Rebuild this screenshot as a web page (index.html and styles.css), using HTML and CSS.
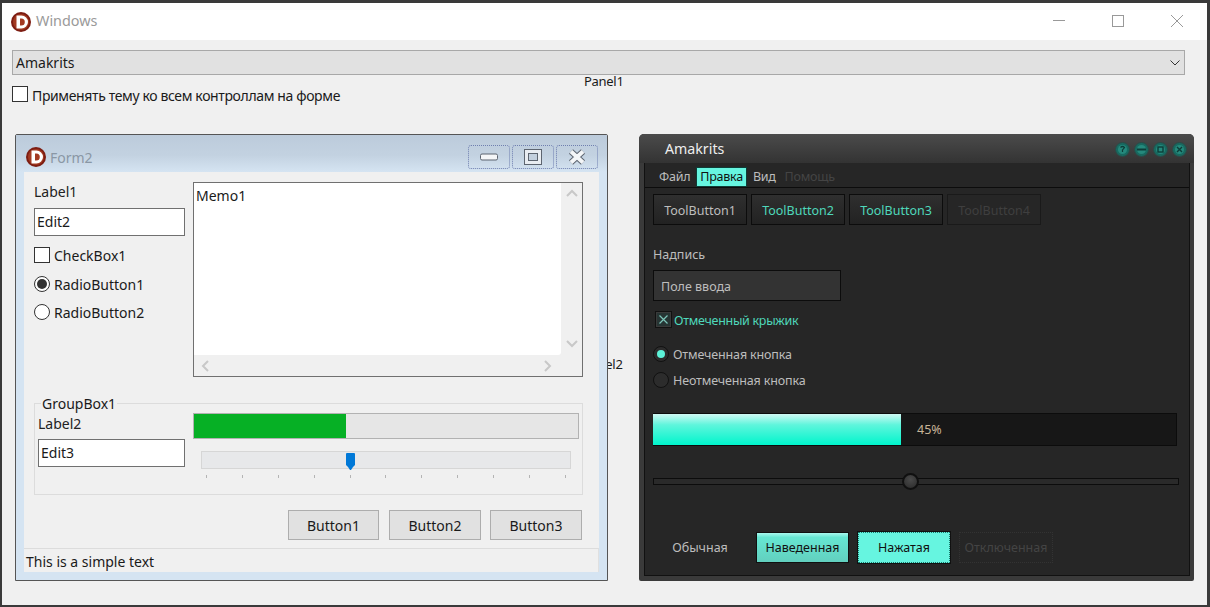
FILE: index.html
```html
<!DOCTYPE html>
<html lang="ru">
<head>
    <meta charset="UTF-8">
    <meta name="viewport" content="width=device-width, initial-scale=1.0">
    <title>Windows</title>
    <link rel="stylesheet" href="styles.css">
</head>
<body>
    <svg class="defs" width="0" height="0">
        <symbol id="logo" viewBox="0 0 20 20">
            <circle cx="10" cy="10" r="10" fill="#7d1d12"/>
            <circle cx="10" cy="10" r="8" fill="#a33a22"/>
            <path d="M5.5 3.5h5a6.5 6.5 0 0 1 0 13h-5zM9 6.5v7h1.3a3.5 3.5 0 0 0 0-7z" fill="#fff" fill-rule="evenodd"/>
        </symbol>
    </svg>

    <div class="app">
        <div class="titlebar">
            <svg class="logo" width="20" height="20"><use href="#logo"/></svg>
            <span class="title-text">Windows</span>
            <div class="caption-btns">
                <div class="caption-btn"><svg width="12" height="12"><path d="M0 5.5h12" stroke="#999"/></svg></div>
                <div class="caption-btn"><svg width="12" height="12"><rect x=".5" y=".5" width="11" height="11" fill="none" stroke="#999"/></svg></div>
                <div class="caption-btn"><svg width="12" height="12"><path d="M0 0l12 12M12 0L0 12" stroke="#999"/></svg></div>
            </div>
        </div>

        <div class="client">
            <div class="combo">
                <span>Amakrits</span>
                <svg width="10" height="6"><path d="M.5 .5L5 5l4.5-4.5" fill="none" stroke="#333"/></svg>
            </div>
            <label class="check-row top-check"><span class="box"></span><span class="top-check-text">Применять тему ко всем контроллам на форме</span></label>

            <span class="panel-cap panel1">Panel1</span>
            <span class="panel-cap panel2">Panel2</span>

            <!-- светлое окно -->
            <div class="form2">
                <div class="f2-title">
                    <svg class="f2-logo" width="20" height="20"><use href="#logo"/></svg>
                    <span class="f2-name">Form2</span>
                    <div class="f2-btns">
                        <div class="f2-btn"><svg width="18" height="8"><rect x=".5" y="1" width="17" height="6" rx="1.5" fill="#f4f6f8" stroke="#5d6570"/></svg></div>
                        <div class="f2-btn"><svg width="18" height="16"><rect x=".5" y=".5" width="17" height="15" fill="#e9edf2" stroke="#5d6570"/><rect x="4.5" y="4.5" width="9" height="7" fill="#c3d0de" stroke="#5d6570"/></svg></div>
                        <div class="f2-btn"><svg width="18" height="16"><path d="M3 2.5l12 11M15 2.5L3 13.5" stroke="#5d6570" stroke-width="6"/><path d="M3 2.5l12 11M15 2.5L3 13.5" stroke="#f4f6f8" stroke-width="4"/></svg></div>
                    </div>
                </div>
                <div class="f2-body">
                    <div class="f2-top">
                        <div class="f2-left">
                            <div class="lbl lbl-first">Label1</div>
                            <div class="edit">Edit2</div>
                            <label class="check-row row28"><span class="box"></span>CheckBox1</label>
                            <label class="check-row row28 first-radio"><span class="radio on"></span>RadioButton1</label>
                            <label class="check-row row28"><span class="radio"></span>RadioButton2</label>
                        </div>
                        <div class="memo">
                            <div class="memo-main">
                                <div class="memo-text">Memo1</div>
                                <div class="vscroll">
                                    <svg width="12" height="8"><path d="M1 7l5-5 5 5" fill="none" stroke="#c8c8c8" stroke-width="2"/></svg>
                                    <svg width="12" height="8"><path d="M1 1l5 5 5-5" fill="none" stroke="#c8c8c8" stroke-width="2"/></svg>
                                </div>
                            </div>
                            <div class="hscroll">
                                <svg width="8" height="12"><path d="M7 1L2 6l5 5" fill="none" stroke="#c8c8c8" stroke-width="2"/></svg>
                                <svg width="8" height="12"><path d="M1 1l5 5-5 5" fill="none" stroke="#c8c8c8" stroke-width="2"/></svg>
                            </div>
                        </div>
                    </div>

                    <div class="group">
                        <span class="group-cap">GroupBox1</span>
                        <div class="group-left">
                            <div class="lbl">Label2</div>
                            <div class="edit edit-small">Edit3</div>
                        </div>
                        <div class="group-right">
                            <div class="progress"><div class="progress-fill"></div></div>
                            <div class="track">
                                <svg class="thumb" width="10" height="17"><path d="M0 1q0-1 1-1h7q1 0 1 1v11l-2 2-2 3-1 0-2-3-2-2z" fill="#0078d7"/></svg>
                            </div>
                            <div class="ticks">
                                <i></i><i></i><i></i><i></i><i></i><i></i><i></i><i></i><i></i><i></i><i></i>
                            </div>
                        </div>
                    </div>

                    <div class="f2-buttons">
                        <div class="btn btn-first">Button1</div>
                        <div class="btn">Button2</div>
                        <div class="btn">Button3</div>
                    </div>

                    <div class="statusbar">This is a simple text</div>
                </div>
            </div>

            <!-- тёмное окно -->
            <div class="dark">
                <div class="d-title">
                    <span class="d-name">Amakrits</span>
                    <div class="d-caps">
                        <svg width="15" height="15"><circle cx="7.5" cy="7.5" r="7" fill="#176a60" stroke="#2d4a47"/><circle cx="7.5" cy="7.5" r="4.5" fill="#25897c"/><path d="M5.5 5.5q2-2 4 0L7.5 8v2" fill="none" stroke="#0c3d38" stroke-width="1.2"/></svg>
                        <svg width="15" height="15"><circle cx="7.5" cy="7.5" r="7" fill="#176a60" stroke="#2d4a47"/><circle cx="7.5" cy="7.5" r="4.5" fill="#25897c"/><path d="M3 7.5h9" stroke="#0c3d38" stroke-width="2"/></svg>
                        <svg width="15" height="15"><circle cx="7.5" cy="7.5" r="7" fill="#176a60" stroke="#2d4a47"/><circle cx="7.5" cy="7.5" r="4.5" fill="#25897c"/><rect x="5" y="5" width="5" height="5" fill="none" stroke="#0c3d38" stroke-width="1.4"/></svg>
                        <svg width="15" height="15"><circle cx="7.5" cy="7.5" r="7" fill="#176a60" stroke="#2d4a47"/><circle cx="7.5" cy="7.5" r="4.5" fill="#25897c"/><path d="M5 5l5 5M10 5l-5 5" stroke="#0c3d38" stroke-width="1.4"/></svg>
                    </div>
                </div>
                <div class="d-body">
                    <div class="d-menu">
                        <span class="d-item">Файл</span>
                        <span class="d-item d-item-active">Правка</span>
                        <span class="d-item">Вид</span>
                        <span class="d-item d-item-off">Помощь</span>
                    </div>
                    <div class="d-content">
                        <div class="d-tools">
                            <div class="tool">ToolButton1</div>
                            <div class="tool tool-teal">ToolButton2</div>
                            <div class="tool tool-teal">ToolButton3</div>
                            <div class="tool tool-off">ToolButton4</div>
                        </div>
                        <div class="d-lbl">Надпись</div>
                        <div class="d-edit">Поле ввода</div>
                        <div class="d-check">
                            <svg width="17" height="17"><rect x=".5" y=".5" width="16" height="16" fill="#3a3a3a" stroke="#111"/><rect x="2" y="2" width="13" height="13" fill="#263433"/><path d="M4.5 4.5l8 8M12.5 4.5l-8 8" stroke="#7cc4b8" stroke-width="1.2"/></svg>
                            Отмеченный крыжик
                        </div>
                        <div class="d-radios">
                            <div class="d-radio"><span class="d-dot d-dot-on"></span>Отмеченная кнопка</div>
                            <div class="d-radio"><span class="d-dot"></span>Неотмеченная кнопка</div>
                        </div>
                        <div class="d-progress"><div class="d-fill"></div><span class="d-pct">45%</span></div>
                        <div class="d-slider"><span class="d-knob"></span></div>
                        <div class="d-buttons">
                            <div class="d-btn">Обычная</div>
                            <div class="d-btn d-btn-hover">Наведенная</div>
                            <div class="d-btn d-btn-down">Нажатая</div>
                            <div class="d-btn d-btn-off">Отключенная</div>
                        </div>
                    </div>
                </div>
            </div>
        </div>
    </div>
</body>
</html>
```

FILE: styles.css
```css
* {
    box-sizing: border-box;
}
html, body {
    height: 100%;
}
body {
    margin: 0;
    overflow: hidden;
    background-color: #3a3a3a;
    font-family: "Noto Sans", "Open Sans", sans-serif;
    font-size: 14px;
    color: #1a1a1a;
}
.defs {
    position: absolute;
}
.app {
    margin: 3px 3px 0 2px;
    height: 602px;
    display: flex;
    flex-direction: column;
}

/* заголовок главного окна */
.titlebar {
    height: 37px;
    flex: none;
    background-color: #fff;
    display: flex;
    align-items: center;
    padding-left: 9px;
}
.title-text {
    margin: -2px 0 0 5px;
    font-size: 14.4px;
    color: #9a9a9a;
}
.caption-btns {
    margin-left: auto;
    margin-right: 1px;
    display: flex;
}
.caption-btn {
    width: 59px;
    height: 37px;
    padding-bottom: 1px;
    display: flex;
    align-items: center;
    justify-content: center;
}

.client {
    flex: 1;
    position: relative;
    background-color: #f0f0f0;
    padding: 10px 0 0 10px;
}
.combo {
    width: 1173px;
    height: 25px;
    background-color: #e1e1e1;
    border: 1px solid #a8a8a8;
    padding: 0 3px;
    display: flex;
    align-items: center;
    justify-content: space-between;
}
.combo svg {
    margin-right: 1px;
}
.check-row {
    display: flex;
    align-items: center;
    gap: 4px;
}
.top-check {
    margin-top: 11px;
    height: 16px;
    letter-spacing: -0.37px;
}
.top-check-text {
    margin-top: 2px;
}
.box {
    width: 16px;
    height: 16px;
    flex: none;
    background-color: #fff;
    border: 1px solid #333;
}
.radio {
    width: 16px;
    height: 16px;
    flex: none;
    background-color: #fff;
    border: 1px solid #333;
    border-radius: 50%;
    display: flex;
    align-items: center;
    justify-content: center;
}
.radio.on::after {
    content: "";
    width: 10px;
    height: 10px;
    border-radius: 50%;
    background-color: #333;
}
.panel-cap {
    position: absolute;
    font-size: 13px;
    letter-spacing: -0.3px;
}
.panel1 {
    left: 582px;
    top: 32px;
}
.panel2 {
    left: 581px;
    top: 315px;
}

/* Form2 */
.form2 {
    position: absolute;
    left: 13px;
    top: 94px;
    width: 593px;
    height: 447px;
    background-color: #d5e4f2;
    border: 1px solid #555;
    border-radius: 2px 2px 0 0;
    display: flex;
    flex-direction: column;
}
.f2-title {
    height: 37px;
    flex: none;
    background: linear-gradient(#bccbdb, #c3d2e1 55%, #d5e4f2);
    display: flex;
    align-items: center;
    padding: 7px 0 0 10px;
}
.f2-name {
    margin-left: 4px;
    color: #8a97a5;
    font-size: 14px;
}
.f2-btns {
    margin-left: auto;
    margin-right: 9px;
    display: flex;
    gap: 2px;
}
.f2-btn {
    width: 42px;
    height: 24px;
    border: 1px dotted #6f7fb0;
    border-radius: 3px;
    display: flex;
    align-items: center;
    justify-content: center;
}
.f2-body {
    flex: 1;
    margin: 0 8px 8px;
    background-color: #f0f0f0;
    display: flex;
    flex-direction: column;
}
.f2-top {
    display: grid;
    grid-template-columns: 151px 390px;
    gap: 8px;
    padding: 10px 0 0 10px;
    height: 205px;
}
.lbl {
    height: 20px;
    line-height: 20px;
    color: #222;
}
.lbl-first {
    height: 21px;
}
.edit {
    height: 28px;
    margin-top: 5px;
    background-color: #fff;
    border: 1px solid #707070;
    line-height: 26px;
    padding-left: 2px;
}
.row28 {
    height: 28px;
}
.edit + .row28 {
    margin-top: 5px;
}
.first-radio {
    margin-top: 1px;
}
.memo {
    height: 195px;
    border: 1px solid #707070;
    background-color: #f0f0f0;
    display: flex;
    flex-direction: column;
}
.memo-main {
    flex: 1;
    display: flex;
}
.memo-text {
    flex: 1;
    background-color: #fff;
    border-radius: 0 0 3px 0;
    padding: 3px 2px;
}
.vscroll {
    width: 21px;
    display: flex;
    flex-direction: column;
    justify-content: space-between;
    align-items: center;
    padding: 6px 0 7px;
}
.hscroll {
    height: 21px;
    display: flex;
    align-items: center;
    justify-content: space-between;
    padding: 0 30px 0 7px;
}

.group {
    position: relative;
    margin: 26px 0 0 10px;
    width: 549px;
    height: 92px;
    border: 1px solid #dcdcdc;
    display: grid;
    grid-template-columns: 147px 386px;
    column-gap: 8px;
    padding: 9px 0 0 3px;
}
.group-cap {
    position: absolute;
    left: 6px;
    top: -10px;
    padding: 0 1px;
    height: 20px;
    line-height: 20px;
    background-color: #f0f0f0;
}
.group-left .lbl {
    margin-top: 1px;
}
.progress {
    height: 26px;
    background-color: #e6e6e6;
    border: 1px solid #b2b2b2;
}
.progress-fill {
    width: 152px;
    height: 100%;
    background-color: #06b025;
}
.track {
    position: relative;
    margin: 12px 0 0 8px;
    width: 370px;
    height: 18px;
    background-color: #e7e8ea;
    border: 1px solid #d6d6d6;
}
.thumb {
    position: absolute;
    left: 144px;
    top: 1px;
}
.ticks {
    margin: 6px 0 0 13px;
    width: 360px;
    display: flex;
    justify-content: space-between;
}
.ticks i {
    width: 1px;
    height: 3px;
    background-color: #b4b4b4;
}

.f2-buttons {
    margin-top: 15px;
    padding-right: 17px;
    display: flex;
    justify-content: flex-end;
    gap: 9px;
}
.btn {
    width: 92px;
    height: 30px;
    background-color: #e1e1e1;
    border: 1px solid #adadad;
    line-height: 30px;
    text-align: center;
}
.btn-first {
    width: 91px;
    margin-right: 1px;
}
.statusbar {
    margin-top: auto;
    height: 24px;
    border-top: 1px solid #dcdcdc;
    border-right: 1px solid #e0e0e0;
    padding-left: 2px;
    line-height: 26px;
}

/* тёмное окно */
.dark {
    position: absolute;
    left: 637px;
    top: 94px;
    width: 555px;
    height: 447px;
    background-color: #3a3a3a;
    border-radius: 5px 5px 2px 2px;
    display: flex;
    flex-direction: column;
    color: #bdbdbd;
    font-size: 12.5px;
}
.d-title {
    height: 29px;
    flex: none;
    background: linear-gradient(#4b4b4b, #333);
    border-radius: 5px 5px 0 0;
    display: flex;
    align-items: center;
    padding: 0 7px 0 26px;
}
.d-name {
    line-height: 28px;
    color: #eee;
    font-size: 14.2px;
}
.d-caps {
    margin-left: auto;
    display: flex;
    gap: 4px;
    margin-top: 1px;
}
.d-body {
    flex: 1;
    margin: 0 4px 5px 5px;
    background-color: #262626;
    border: 1px solid #111;
    border-top: 0;
    display: flex;
    flex-direction: column;
}
.d-menu {
    height: 25px;
    flex: none;
    border-bottom: 1px solid #0c0c0c;
    display: flex;
    align-items: flex-end;
    padding-left: 11px;
    gap: 3px;
    letter-spacing: -0.25px;
}
.d-item {
    height: 20px;
    line-height: 19px;
    padding: 0 3px;
}
.d-item-active {
    padding: 0 4px;
    background-color: #66f5e0;
    color: #111;
    box-shadow: inset 0 0 0 1px #0e3d37;
}
.d-item-off {
    color: #444;
}
.d-content {
    padding: 6px 0 0 8px;
    display: flex;
    flex-direction: column;
    align-items: flex-start;
}
.d-tools {
    display: flex;
    gap: 4px;
}
.tool {
    width: 94px;
    height: 31px;
    background: linear-gradient(#2f2f2f, #222);
    border: 1px solid #0c0c0c;
    line-height: 31px;
    text-align: center;
}
.tool-teal {
    color: #4fd8bb;
}
.tool-off {
    color: #3f3f3f;
    background: #262626;
    border-color: #1a1a1a;
}
.d-lbl {
    margin-top: 20px;
    height: 20px;
    line-height: 20px;
}
.d-edit {
    margin-top: 5px;
    width: 188px;
    height: 31px;
    background-color: #333;
    border: 1px solid #0c0c0c;
    padding-left: 7px;
    line-height: 31px;
}
.d-check {
    margin: 10px 0 0 2px;
    height: 19px;
    display: flex;
    gap: 2px;
    line-height: 19px;
    color: #4fd8bb;
    letter-spacing: -0.3px;
}
.d-radios {
    margin-top: 11px;
    letter-spacing: -0.15px;
}
.d-radio {
    height: 26px;
    display: flex;
    align-items: center;
    gap: 4px;
}
.d-dot {
    width: 16px;
    height: 16px;
    border-radius: 50%;
    background-color: #2c2c2c;
    border: 1px solid #111;
    display: flex;
    align-items: center;
    justify-content: center;
}
.d-dot-on::after {
    content: "";
    width: 8px;
    height: 8px;
    border-radius: 50%;
    background-color: #5cf2d8;
}
.d-progress {
    margin-top: 20px;
    width: 524px;
    height: 33px;
    background-color: #171717;
    border: 1px solid #0c0c0c;
    display: flex;
    align-items: center;
}
.d-fill {
    width: 248px;
    height: 100%;
    margin-left: -1px;
    background: linear-gradient(#cff8f3, #5ff5dc 35%, #00f5cc);
}
.d-pct {
    margin-left: 16px;
    color: #c8b497;
}
.d-slider {
    position: relative;
    margin-top: 32px;
    width: 526px;
    height: 7px;
    background-color: #2a2a2a;
    border: 1px solid #0c0c0c;
}
.d-knob {
    position: absolute;
    left: 248px;
    top: -6px;
    width: 17px;
    height: 17px;
    border-radius: 50%;
    background: radial-gradient(circle at 50% 35%, #4a4a4a, #2a2a2a);
    border: 2px solid #101010;
}
.d-buttons {
    margin-top: 47px;
    display: flex;
    gap: 9px;
}
.d-btn {
    width: 94px;
    height: 31px;
    line-height: 32px;
    text-align: center;
}
.d-btn-hover {
    width: 93px;
    background: linear-gradient(#a9f8ee, #66e6d2 15%, #62d0bf);
    border: 1px solid #101010;
    color: #111;
    line-height: 30px;
}
.d-btn-down {
    width: 92px;
    background-color: #66f5e0;
    border: 1px dotted #17786b;
    outline: 1px solid #111;
    color: #111;
    line-height: 30px;
}
.d-btn-off {
    border: 1px dotted #333;
    color: #444;
    line-height: 30px;
}
```
